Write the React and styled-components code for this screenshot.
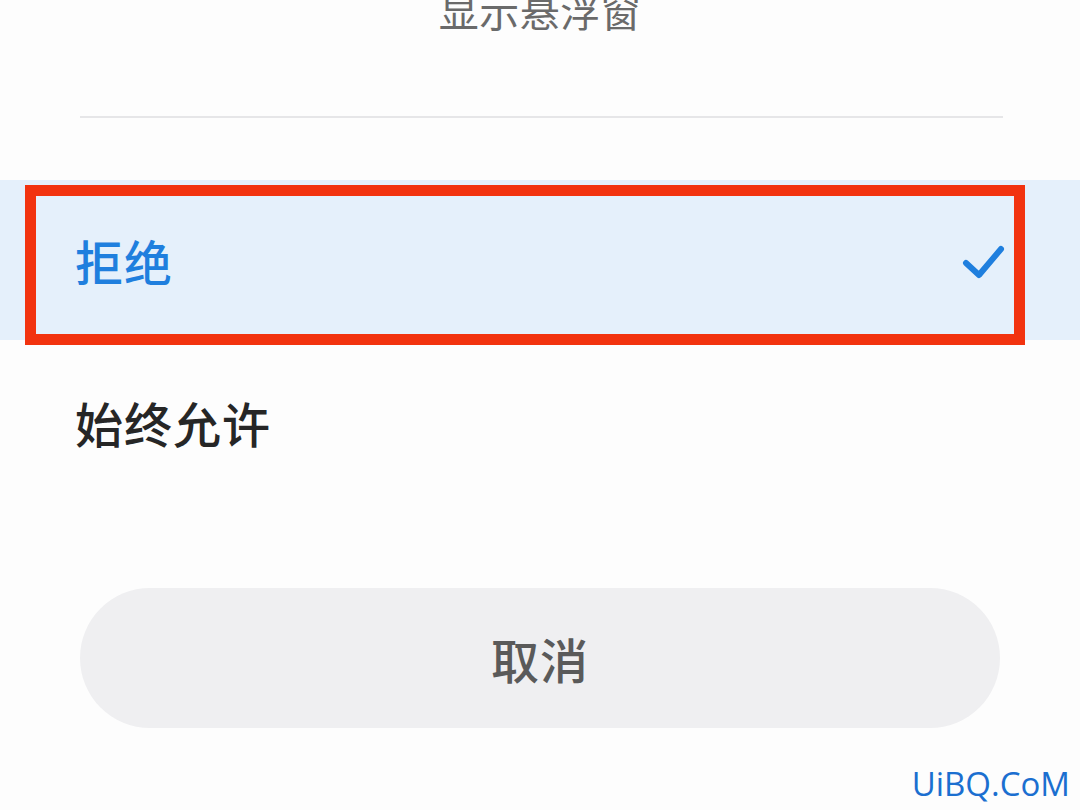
import React from "react";
import styled, { createGlobalStyle } from "styled-components";

const GlobalStyle = createGlobalStyle`
  html, body {
    margin: 0;
    padding: 0;
    background: #fdfdfd;
  }
  body {
    font-family: "Noto Sans CJK SC", "Noto Sans", sans-serif;
    overflow: hidden;
  }
`;

const Sheet = styled.div`
  position: relative;
  width: 1080px;
  height: 810px;
  background: #fdfdfd;
  overflow: hidden;
  display: flex;
  flex-direction: column;
`;

const Title = styled.h2`
  margin: -10px 0 0;
  font-size: 40px;
  line-height: 40px;
  font-weight: 400;
  color: #6a6a6a;
  text-align: center;
  letter-spacing: 0.5px;
`;

const Divider = styled.hr`
  margin: 86px 77px 0 80px;
  border: 0;
  height: 2px;
  background: #e6e6e8;
`;

const OptionList = styled.ul`
  list-style: none;
  margin: 62px 0 0;
  padding: 0;
  display: flex;
  flex-direction: column;
`;

const Option = styled.li`
  position: relative;
  height: ${({ $selected }) => ($selected ? "160px" : "164px")};
  padding: 0 75px;
  display: flex;
  align-items: center;
  justify-content: space-between;
  background: ${({ $selected }) => ($selected ? "#e5f0fb" : "transparent")};
`;

const OptionLabel = styled.span`
  font-size: 48px;
  line-height: 1;
  font-weight: 500;
  letter-spacing: 1px;
  color: ${({ $selected }) => ($selected ? "#1f7fde" : "#262626")};
`;

const Check = styled.svg`
  width: 46px;
  height: 40px;
  margin-right: -2px;
  margin-top: 6px;
`;

const Annotation = styled.div`
  position: absolute;
  left: 25px;
  top: 5px;
  width: 1000px;
  height: 160px;
  box-sizing: border-box;
  border: 11px solid #f2330f;
  pointer-events: none;
`;

const CancelButton = styled.button`
  margin: 84px 80px 0;
  height: 140px;
  border: 0;
  border-radius: 70px;
  background: #efeff1;
  color: #5a5a5a;
  font-family: "Noto Sans CJK SC", "Noto Sans", sans-serif;
  font-size: 48px;
  font-weight: 500;
  letter-spacing: 1px;
  display: flex;
  align-items: center;
  justify-content: center;
`;

const Watermark = styled.span`
  position: absolute;
  right: 10px;
  bottom: 6px;
  font-family: "Open Sans", "DejaVu Sans", sans-serif;
  font-size: 33px;
  line-height: 1.2;
  color: #1b6fd0;
`;

const CheckIcon = () => (
  <Check viewBox="0 0 46 40">
    <path
      d="M5 20 L18 32 L40 6"
      fill="none"
      stroke="#1f7fde"
      strokeWidth="6"
      strokeLinecap="round"
      strokeLinejoin="round"
    />
  </Check>
);

const options = [
  { label: "拒绝", selected: true },
  { label: "始终允许", selected: false },
];

const App = () => {
  return (
    <>
      <GlobalStyle />
      <Sheet>
        <Title>显示悬浮窗</Title>
        <Divider />
        <OptionList>
          {options.map((opt) => (
            <Option key={opt.label} $selected={opt.selected}>
              <OptionLabel $selected={opt.selected}>{opt.label}</OptionLabel>
              {opt.selected && <CheckIcon />}
              {opt.selected && <Annotation />}
            </Option>
          ))}
        </OptionList>
        <CancelButton>取消</CancelButton>
        <Watermark>UiBQ.CoM</Watermark>
      </Sheet>
    </>
  );
};

export default App;
